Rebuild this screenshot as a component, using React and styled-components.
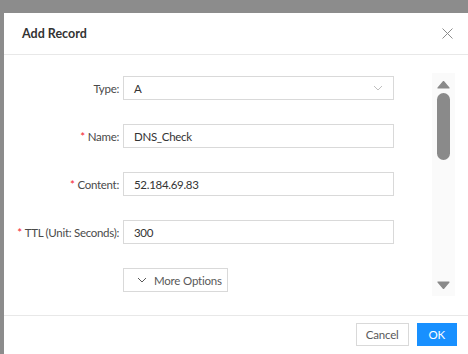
import React, { Fragment } from 'react';
import styled, { createGlobalStyle } from 'styled-components';

const GlobalStyle = createGlobalStyle`
  * {
    margin: 0;
    padding: 0;
    box-sizing: border-box;
  }

  body {
    font-family: 'Lato', 'Open Sans', sans-serif;
    background: #8c8c8c;
    width: 468px;
    height: 354px;
    overflow: hidden;
  }
`;

const COLORS = {
  text: '#333333',
  label: '#4a4a4a',
  border: '#d9d9d9',
  divider: '#e8e8e8',
  required: '#f5222d',
  primary: '#1890ff',
  muted: '#bfbfbf',
  scroll: '#8a8a8a',
};

const Overlay = styled.div`
  width: 468px;
  height: 354px;
  padding: 13px 0 0 4px;
`;

const Modal = styled.div`
  width: 464px;
  height: 341px;
  background: #fff;
  display: flex;
  flex-direction: column;
`;

const Header = styled.div`
  height: 42px;
  display: flex;
  align-items: center;
  justify-content: space-between;
  padding: 0 14px 0 18px;
  border-bottom: 1px solid ${COLORS.divider};
`;

const Title = styled.h1`
  font-size: 12.5px;
  font-weight: 700;
  color: ${COLORS.text};
`;

const CloseButton = styled.button`
  border: none;
  background: none;
  width: 14px;
  height: 14px;
  display: flex;
  align-items: center;
  justify-content: center;
`;

const Body = styled.div`
  height: 261px;
  display: flex;
  border-bottom: 1px solid ${COLORS.divider};
`;

const Form = styled.form`
  flex: 1;
  display: flex;
  flex-direction: column;
  gap: 24px;
  padding-top: 21px;
`;

const FormRow = styled.div`
  display: flex;
  align-items: center;
  height: 24px;
`;

const Label = styled.label`
  width: 119px;
  padding-right: 4px;
  text-align: right;
  font-size: 11.5px;
  letter-spacing: -0.3px;
  color: ${COLORS.label};
  white-space: nowrap;
`;

const Required = styled.span`
  color: ${COLORS.required};
  margin-right: 3px;
`;

const Field = styled.div`
  width: 271px;
  height: 24px;
  border: 1px solid ${COLORS.border};
  display: flex;
  align-items: center;
  justify-content: space-between;
  padding: 0 10px;
  font-size: 11.5px;
  letter-spacing: -0.3px;
  color: ${COLORS.text};
`;

const MoreButton = styled.button`
  margin-left: 119px;
  width: 105px;
  height: 24px;
  border: 1px solid ${COLORS.border};
  background: #fff;
  display: flex;
  align-items: center;
  gap: 7px;
  padding-left: 13px;
  font-family: inherit;
  font-size: 11.5px;
  letter-spacing: -0.2px;
  white-space: nowrap;
  color: #595959;
`;

const ScrollTrack = styled.div`
  width: 23px;
  margin: 18px 13px 19px 0;
  background: #fafafa;
  display: flex;
  flex-direction: column;
  align-items: center;
  padding: 8px 0 7px;
`;

const ScrollThumb = styled.div`
  width: 13px;
  height: 67px;
  margin-top: 4px;
  border-radius: 7px;
  background: ${COLORS.scroll};
`;

const Spacer = styled.div`
  flex: 1;
`;

const Footer = styled.div`
  flex: 1;
  display: flex;
  justify-content: flex-end;
  align-items: flex-start;
  gap: 8px;
  padding: 7px 11px 0 0;
`;

const Button = styled.button`
  height: 23px;
  padding: 0 ${(p) => (p.$primary ? '11px' : '9px')};
  border: 1px solid ${(p) => (p.$primary ? COLORS.primary : COLORS.border)};
  background: ${(p) => (p.$primary ? COLORS.primary : '#fff')};
  color: ${(p) => (p.$primary ? '#fff' : '#595959')};
  font-family: inherit;
  font-size: 11.5px;
  letter-spacing: -0.2px;
`;

const Chevron = ({ color = '#bfbfbf', size = 10 }) => (
  <svg width={size} height={size} viewBox="0 0 10 10" fill="none">
    <path d="M1 3 L5 7 L9 3" stroke={color} strokeWidth="1" />
  </svg>
);

const Arrow = ({ down }) => (
  <svg width="13" height="8" viewBox="0 0 13 8">
    <path
      d={down ? 'M1 1 H12 L6.5 7.5 Z' : 'M1 7 H12 L6.5 0.5 Z'}
      fill={COLORS.scroll}
      stroke={COLORS.scroll}
      strokeLinejoin="round"
      strokeWidth="1.2"
    />
  </svg>
);

const rows = [
  { label: 'Type', value: 'A', select: true },
  { label: 'Name', value: 'DNS_Check', required: true },
  { label: 'Content', value: '52.184.69.83', required: true },
  { label: 'TTL (Unit: Seconds)', value: '300', required: true },
];

const App = () => {
  return (
    <Fragment>
      <GlobalStyle />
      <Overlay>
        <Modal>
          <Header>
            <Title>Add Record</Title>
            <CloseButton>
              <svg width="11" height="11" viewBox="0 0 11 11">
                <path d="M0.5 0.5 L10.5 10.5 M10.5 0.5 L0.5 10.5" stroke="#8c8c8c" strokeWidth="1" />
              </svg>
            </CloseButton>
          </Header>

          <Body>
            <Form>
              {rows.map((row) => (
                <FormRow key={row.label}>
                  <Label>
                    {row.required && <Required>*</Required>}
                    {row.label}:
                  </Label>
                  <Field>
                    {row.value}
                    {row.select && <Chevron />}
                  </Field>
                </FormRow>
              ))}
              <FormRow>
                <MoreButton type="button">
                  <Chevron color="#595959" />
                  More Options
                </MoreButton>
              </FormRow>
            </Form>

            <ScrollTrack>
              <Arrow />
              <ScrollThumb />
              <Spacer />
              <Arrow down />
            </ScrollTrack>
          </Body>

          <Footer>
            <Button>Cancel</Button>
            <Button $primary>OK</Button>
          </Footer>
        </Modal>
      </Overlay>
    </Fragment>
  );
};

export default App;
